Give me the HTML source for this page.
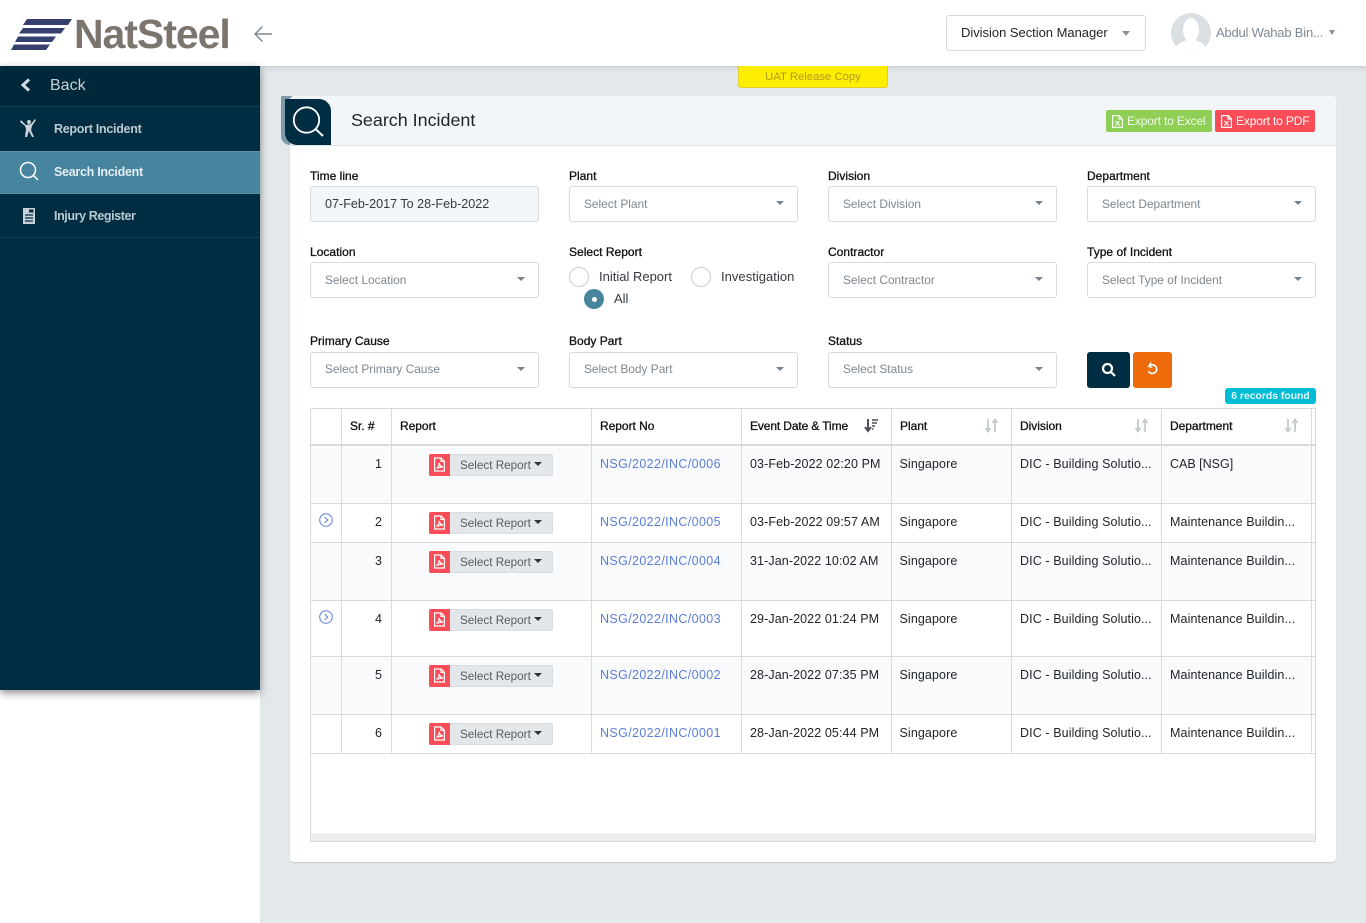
<!DOCTYPE html>
<html><head><meta charset="utf-8"><title>Search Incident</title>
<style>
*{box-sizing:border-box}
html,body{margin:0;padding:0;width:1366px;height:923px;overflow:hidden;background:#e3e8eb;font-family:"Liberation Sans",sans-serif;font-size:13px;color:#212529}
.a{position:absolute;white-space:nowrap}
.l{position:absolute;font-size:12px;color:#111;white-space:nowrap;-webkit-text-stroke:.3px #111;letter-spacing:.02px}
.s{position:absolute;width:229px;height:36px;background:#fff;border:1px solid #d6dbdf;border-radius:3px;font-size:11.9px;color:#7d8791;line-height:33px;padding-left:14px;white-space:nowrap}
.s:after{content:"";position:absolute;right:13px;top:14px;border-left:4.5px solid transparent;border-right:4.5px solid transparent;border-top:4.5px solid #77818b}
.v{position:absolute;width:1px;background:#d7dbdf}
.h{position:absolute;height:1px;background:#d7dbdf;left:310px;width:1006px}
.bg{position:absolute;left:311px;width:1004px}
.th{position:absolute;top:419px;font-size:12px;color:#111;white-space:nowrap;-webkit-text-stroke:.3px #111;letter-spacing:-.03px}
.t{position:absolute;font-size:12.5px;color:#212529;white-space:nowrap;letter-spacing:.1px}
.lnk{color:#5b7fd6;letter-spacing:.37px}
.n{text-align:right;width:20px;left:362px}
.btn{position:absolute;left:429px;width:124px;height:22px;border-radius:2px;background:#e3e7ea;border:1px solid #d9dde0;font-size:11.7px;color:#555d63;line-height:21px;padding-left:30px;white-space:nowrap}
.btn b{position:absolute;left:-1px;top:-1px;width:21px;height:22px;background:#fb4d57;border-radius:2px 0 0 2px}
.btn svg{position:absolute;left:4px;top:3px}
.btn i{position:absolute;left:104px;top:7px;border-left:4px solid transparent;border-right:4px solid transparent;border-top:4px solid #2d3338}
.sort{position:absolute;top:418px}
</style></head><body>

<!-- header -->
<div class="a" style="left:0;top:0;width:1366px;height:66px;background:#fff;box-shadow:0 2px 6px rgba(0,0,0,.12)"></div>
<svg class="a" style="left:10px;top:17px" width="64" height="34" viewBox="0 0 64 34"><g fill="#35406f"><polygon points="17,2 62,2 58,8 13,8"/><polygon points="13,11 55,11 51,16.500 9,16.500"/><polygon points="8,19.500 46,19.500 42,25 5,25"/><polygon points="4,27.500 40,27.500 36,33 1,33"/></g></svg>
<div class="a" style="left:74px;top:10px;font-size:41px;font-weight:bold;color:#7b756e;letter-spacing:-1.050px;line-height:48px">NatSteel</div>
<svg class="a" style="left:253px;top:24px" width="20" height="20" viewBox="0 0 20 20" fill="none" stroke="#7e8a96" stroke-width="1.500"><path d="M19 10H2M9.500 2.500L2 10l7.500 7.500"/></svg>
<div class="a" style="left:946px;top:15px;width:200px;height:36px;border:1px solid #d6dbdf;border-radius:3px;background:#fff"></div>
<div class="a" style="left:961px;top:25px;font-size:13px;color:#212529;letter-spacing:-.03px">Division Section Manager</div>
<div class="a" style="left:1122px;top:31px;border-left:4px solid transparent;border-right:4px solid transparent;border-top:5px solid #8a939b"></div>
<svg class="a" style="left:1171px;top:13px" width="40" height="40" viewBox="0 0 40 40"><defs><clipPath id="c"><circle cx="20" cy="20" r="20"/></clipPath></defs><circle cx="20" cy="20" r="20" fill="#d9dfe3"/><g clip-path="url(#c)" fill="#fff"><ellipse cx="20" cy="17" rx="8" ry="12"/><path d="M3 40c1-9 8-11 13-13h8c5 2 12 4 13 13z"/></g></svg>
<div class="a" style="left:1216px;top:25px;font-size:13px;color:#7e8a96;letter-spacing:-.2px">Abdul Wahab Bin...</div>
<div class="a" style="left:1329px;top:30px;border-left:3.500px solid transparent;border-right:3.500px solid transparent;border-top:5px solid #8a939b"></div>

<!-- sidebar -->
<div class="a" style="left:0;top:690px;width:260px;height:233px;background:#fff"></div>
<div class="a" style="left:0;top:66px;width:260px;height:624px;background:#002d42;box-shadow:0 3px 8px rgba(0,0,0,.45)"></div>
<div class="a" style="left:0;top:66px;width:260px;height:41px;background:#00283b;border-bottom:1px solid #123f54"></div>
<svg class="a" style="left:20px;top:78px" width="11" height="14" viewBox="0 0 11 14" fill="none" stroke="#d5dde2" stroke-width="3"><path d="M9 1.500L3 7l6 5.500"/></svg>
<div class="a" style="left:50px;top:77px;font-size:16px;color:#c8d2d8">Back</div>
<svg class="a" style="left:20px;top:118px" width="18" height="20" viewBox="0 0 18 20" fill="#c8d2d8"><circle cx="9" cy="4" r="2"/><path d="M1 2l5 5 5 -1 4-5 1 1-4 6-1 4 3 7h-2l-3-6-2 6H5l1-8-1-3-5-4z"/></svg>
<div class="a" style="left:54px;top:122px;font-size:12.500px;font-weight:bold;color:#bdc9d0;letter-spacing:-.28px">Report Incident</div>
<div class="a" style="left:0;top:151px;width:260px;height:43px;background:#47859f;border-top:1px solid #5a93a9;border-bottom:1px solid #5a93a9"></div>
<svg class="a" style="left:19px;top:161px" width="20" height="20" viewBox="0 0 20 20" fill="none" stroke="#fff" stroke-width="1.500"><circle cx="9" cy="9" r="7.500"/><path d="M14.500 14.500l4.500 4.500"/></svg>
<div class="a" style="left:54px;top:165px;font-size:12.500px;font-weight:bold;color:#e4edf1;letter-spacing:-.28px">Search Incident</div>
<svg class="a" style="left:22px;top:208px" width="14" height="16" viewBox="0 0 14 16"><path d="M1 0h12v16H1z" fill="#c8d2d8"/><path d="M3 7h8M3 10h8M3 13h8" stroke="#002d42" stroke-width="1.200"/><path d="M7 1.500h4.500v3H7z" fill="#002d42"/></svg>
<div class="a" style="left:54px;top:209px;font-size:12.500px;font-weight:bold;color:#bdc9d0;letter-spacing:-.4px">Injury Register</div>
<div class="a" style="left:0;top:237px;width:260px;height:1px;background:#123f54"></div>

<!-- uat -->
<div class="a" style="left:738px;top:66px;width:150px;height:22px;background:#ffee00;border:1px solid #e4cf2a;border-top:0;border-radius:0 0 3px 3px;text-align:center;font-size:11.300px;color:#b19a1d;line-height:23px">UAT Release Copy</div>

<!-- card -->
<div class="a" style="left:290px;top:96px;width:1046px;height:766px;background:#fff;border-radius:4px;box-shadow:0 1px 1px rgba(0,0,0,.12)"></div>
<div class="a" style="left:281px;top:96px;width:18px;height:49px;background:#7f99a6;border-radius:2px 0 0 14px"></div>
<div class="a" style="left:290px;top:96px;width:1046px;height:50px;background:#f3f6f9;border-bottom:1px solid #dfe3e6;border-radius:4px 4px 0 0"></div>
<div class="a" style="left:281px;top:96px;width:9px;height:49px;background:#7f99a6;border-radius:2px 0 0 14px"></div>
<div class="a" style="left:285px;top:99px;width:46px;height:46px;background:#002d42;border-radius:0 12px 0 12px"></div>
<svg class="a" style="left:292px;top:106px" width="34" height="32" viewBox="0 0 34 32" fill="none" stroke="#fff" stroke-width="1.800"><circle cx="14.500" cy="14" r="12.700"/><path d="M23.500 23l7.500 7" stroke-width="2"/></svg>
<div class="a" style="left:351px;top:110px;font-size:17.900px;color:#212529">Search Incident</div>
<div class="a" style="left:1106px;top:110px;width:106px;height:22px;background:#8fcf55;border-radius:2px;color:#f2faea;font-size:12px;line-height:22px;padding-left:21px;letter-spacing:-.15px">Export to Excel</div>
<svg class="a" style="left:1112px;top:115px" width="11" height="13" viewBox="0 0 11 13" fill="none" stroke="#f2faea" stroke-width="1.200"><path d="M.6.6h6.500l3.300 3.300v8.500H.6zM7 .6v3.400h3.400M3.500 6l4 4.500M7.500 6l-4 4.500"/></svg>
<div class="a" style="left:1215px;top:110px;width:100px;height:22px;background:#fb4d57;border-radius:2px;color:#fff;font-size:12px;line-height:22px;padding-left:21px;letter-spacing:-.15px">Export to PDF</div>
<svg class="a" style="left:1221px;top:115px" width="11" height="13" viewBox="0 0 11 13" fill="none" stroke="#fff" stroke-width="1.200"><path d="M.6.6h6.500l3.300 3.300v8.500H.6zM7 .6v3.400h3.400M3.500 6l4 4.500M7.500 6l-4 4.500"/></svg>

<!-- filters -->
<div class="l" style="left:310px;top:169px">Time line</div>
<div class="a" style="left:310px;top:186px;width:229px;height:36px;background:#f3f6f9;border:1px solid #d6dbdf;border-radius:3px;font-size:12.600px;line-height:35px;padding-left:14px;color:#343a40">07-Feb-2017 To 28-Feb-2022</div>
<div class="l" style="left:569px;top:169px">Plant</div><div class="s" style="left:569px;top:186px;line-height:34px">Select Plant</div>
<div class="l" style="left:828px;top:169px">Division</div><div class="s" style="left:828px;top:186px;line-height:34px">Select Division</div>
<div class="l" style="left:1087px;top:169px">Department</div><div class="s" style="left:1087px;top:186px;line-height:34px">Select Department</div>
<div class="l" style="left:310px;top:245px">Location</div><div class="s" style="left:310px;top:262px;line-height:34px">Select Location</div>
<div class="l" style="left:569px;top:245px">Select Report</div>
<div class="a" style="left:569px;top:267px;width:20px;height:20px;border:1px solid #c9ced3;border-radius:50%;background:#fff"></div>
<div class="a" style="left:599px;top:269px;font-size:13px;color:#343a40">Initial Report</div>
<div class="a" style="left:691px;top:267px;width:20px;height:20px;border:1px solid #c9ced3;border-radius:50%;background:#fff"></div>
<div class="a" style="left:721px;top:269px;font-size:13px;color:#343a40;letter-spacing:.03px">Investigation</div>
<div class="a" style="left:584px;top:289px;width:20px;height:20px;border-radius:50%;background:#47859f"></div>
<div class="a" style="left:591.500px;top:296.500px;width:5px;height:5px;border-radius:50%;background:#fff"></div>
<div class="a" style="left:614px;top:291px;font-size:13px;color:#343a40">All</div>
<div class="l" style="left:828px;top:245px">Contractor</div><div class="s" style="left:828px;top:262px;line-height:34px">Select Contractor</div>
<div class="l" style="left:1087px;top:245px">Type of Incident</div><div class="s" style="left:1087px;top:262px;line-height:34px">Select Type of Incident</div>
<div class="l" style="left:310px;top:334px">Primary Cause</div><div class="s" style="left:310px;top:352px">Select Primary Cause</div>
<div class="l" style="left:569px;top:334px">Body Part</div><div class="s" style="left:569px;top:352px">Select Body Part</div>
<div class="l" style="left:828px;top:334px">Status</div><div class="s" style="left:828px;top:352px">Select Status</div>
<div class="a" style="left:1087px;top:352px;width:43px;height:36px;background:#002d42;border-radius:3px"></div>
<svg class="a" style="left:1101px;top:362px" width="15" height="15" viewBox="0 0 15 15" fill="none" stroke="#fff" stroke-width="2.200"><circle cx="6.500" cy="6.500" r="4.500"/><path d="M10 10l4 4"/></svg>
<div class="a" style="left:1133px;top:352px;width:39px;height:36px;background:#ee6b0c;border-radius:3px"></div>
<svg class="a" style="left:1146px;top:362px" width="13" height="14" viewBox="0 0 13 14" fill="none" stroke="#fff" stroke-width="1.600"><path d="M3 4.500a4.300 4.300 0 1 1-.5 4.500"/><path d="M5 .5L2.500 4.500 6.500 5.500" stroke-width="1.300"/></svg>
<div class="a" style="left:1225px;top:388px;width:91px;height:16px;background:#00bcd4;border-radius:3px;color:#e6fafd;font-size:10.400px;font-weight:bold;line-height:18px;text-align:center">6 records found</div>

<!-- table -->
<div class="a" style="left:310px;top:408px;width:1006px;height:434px;background:#fff"></div>
<div class="bg" style="top:446px;height:57px;background:#f9fafc"></div>
<div class="bg" style="top:543px;height:57px;background:#f9fafc"></div>
<div class="bg" style="top:657px;height:57px;background:#f9fafc"></div>
<div class="a" style="left:311px;top:833px;width:1004px;height:8px;background:#eeeeee"></div>
<div class="h" style="top:408px"></div>
<div class="h" style="top:444px;height:2px"></div>
<div class="h" style="top:503px"></div><div class="h" style="top:542px"></div><div class="h" style="top:600px"></div><div class="h" style="top:656px"></div><div class="h" style="top:714px"></div><div class="h" style="top:753px"></div><div class="h" style="top:841px"></div>
<div class="v" style="left:310px;top:408px;height:434px"></div>
<div class="v" style="left:1315px;top:408px;height:434px"></div>
<div class="v" style="left:341px;top:408px;height:345px"></div>
<div class="v" style="left:391px;top:408px;height:345px"></div>
<div class="v" style="left:591px;top:408px;height:345px"></div>
<div class="v" style="left:741px;top:408px;height:345px"></div>
<div class="v" style="left:891px;top:408px;height:345px"></div>
<div class="v" style="left:1011px;top:408px;height:345px"></div>
<div class="v" style="left:1161px;top:408px;height:345px"></div>
<div class="v" style="left:1311px;top:408px;height:345px"></div>

<div class="th" style="left:350px">Sr. #</div>
<div class="th" style="left:400px">Report</div>
<div class="th" style="left:600px">Report No</div>
<div class="th" style="left:750px;letter-spacing:-.12px">Event Date &amp; Time</div>
<div class="th" style="left:900px">Plant</div>
<div class="th" style="left:1020px">Division</div>
<div class="th" style="left:1170px">Department</div>
<svg class="sort" style="left:864px" width="15" height="15" viewBox="0 0 15 15" fill="none" stroke="#4a5056" stroke-width="2"><path d="M4 1v11M1 9l3 4 3-4"/><path d="M8 2h6M8 5h5M8 8h3M8 11h1.500" stroke-width="1.500"/></svg>
<svg class="sort" style="left:984px" width="15" height="15" viewBox="0 0 15 15" fill="none" stroke="#c5cacd" stroke-width="1.800"><path d="M4 1v12M1.500 10L4 13.500 6.500 10M11 14V2M8.500 5L11 1.500 13.500 5"/></svg>
<svg class="sort" style="left:1134px" width="15" height="15" viewBox="0 0 15 15" fill="none" stroke="#c5cacd" stroke-width="1.800"><path d="M4 1v12M1.500 10L4 13.500 6.500 10M11 14V2M8.500 5L11 1.500 13.500 5"/></svg>
<svg class="sort" style="left:1284px" width="15" height="15" viewBox="0 0 15 15" fill="none" stroke="#c5cacd" stroke-width="1.800"><path d="M4 1v12M1.500 10L4 13.500 6.500 10M11 14V2M8.500 5L11 1.500 13.500 5"/></svg>

<svg class="a" style="left:319px;top:513px" width="14" height="14" viewBox="0 0 14 14" fill="none" stroke="#5b7fd6"><circle cx="7" cy="7" r="6.300"/><path d="M5.700 4l3 3-3 3"/></svg>
<svg class="a" style="left:319px;top:610px" width="14" height="14" viewBox="0 0 14 14" fill="none" stroke="#5b7fd6"><circle cx="7" cy="7" r="6.300"/><path d="M5.700 4l3 3-3 3"/></svg>

<!-- row 1 -->
<div class="t n" style="top:457px">1</div>
<div class="btn" style="top:454px"><b><svg width="13" height="15" viewBox="0 0 13 15" fill="none" stroke="#fff" stroke-width="1.200"><path d="M1.600 1h6.500l3.300 3.300V14H1.600zM8 1v3.400h3.400M3.500 11.500c2-1 3-4 2.500-5.500.5 2 2 3.500 4 4-2.500 0-4.500 .5-6.500 1.500z"/></svg></b>Select Report<i></i></div>
<div class="t lnk" style="left:600px;top:457px">NSG/2022/INC/0006</div>
<div class="t" style="left:750px;top:457px">03-Feb-2022 02:20 PM</div>
<div class="t" style="left:899.500px;top:457px">Singapore</div>
<div class="t" style="left:1020px;top:457px">DIC - Building Solutio...</div>
<div class="t" style="left:1170px;top:457px;letter-spacing:0">CAB [NSG]</div>
<!-- row 2 -->
<div class="t n" style="top:515px">2</div>
<div class="btn" style="top:512px"><b><svg width="13" height="15" viewBox="0 0 13 15" fill="none" stroke="#fff" stroke-width="1.200"><path d="M1.600 1h6.500l3.300 3.300V14H1.600zM8 1v3.400h3.400M3.500 11.500c2-1 3-4 2.500-5.500.5 2 2 3.500 4 4-2.500 0-4.500 .5-6.500 1.500z"/></svg></b>Select Report<i></i></div>
<div class="t lnk" style="left:600px;top:515px">NSG/2022/INC/0005</div>
<div class="t" style="left:750px;top:515px">03-Feb-2022 09:57 AM</div>
<div class="t" style="left:899.500px;top:515px">Singapore</div>
<div class="t" style="left:1020px;top:515px">DIC - Building Solutio...</div>
<div class="t" style="left:1170px;top:515px">Maintenance Buildin...</div>
<!-- row 3 -->
<div class="t n" style="top:554px">3</div>
<div class="btn" style="top:551px"><b><svg width="13" height="15" viewBox="0 0 13 15" fill="none" stroke="#fff" stroke-width="1.200"><path d="M1.600 1h6.500l3.300 3.300V14H1.600zM8 1v3.400h3.400M3.500 11.500c2-1 3-4 2.500-5.500.5 2 2 3.500 4 4-2.500 0-4.500 .5-6.500 1.500z"/></svg></b>Select Report<i></i></div>
<div class="t lnk" style="left:600px;top:554px">NSG/2022/INC/0004</div>
<div class="t" style="left:750px;top:554px">31-Jan-2022 10:02 AM</div>
<div class="t" style="left:899.500px;top:554px">Singapore</div>
<div class="t" style="left:1020px;top:554px">DIC - Building Solutio...</div>
<div class="t" style="left:1170px;top:554px">Maintenance Buildin...</div>
<!-- row 4 -->
<div class="t n" style="top:612px">4</div>
<div class="btn" style="top:609px"><b><svg width="13" height="15" viewBox="0 0 13 15" fill="none" stroke="#fff" stroke-width="1.200"><path d="M1.600 1h6.500l3.300 3.300V14H1.600zM8 1v3.400h3.400M3.500 11.500c2-1 3-4 2.500-5.500.5 2 2 3.500 4 4-2.500 0-4.500 .5-6.500 1.500z"/></svg></b>Select Report<i></i></div>
<div class="t lnk" style="left:600px;top:612px">NSG/2022/INC/0003</div>
<div class="t" style="left:750px;top:612px">29-Jan-2022 01:24 PM</div>
<div class="t" style="left:899.500px;top:612px">Singapore</div>
<div class="t" style="left:1020px;top:612px">DIC - Building Solutio...</div>
<div class="t" style="left:1170px;top:612px">Maintenance Buildin...</div>
<!-- row 5 -->
<div class="t n" style="top:668px">5</div>
<div class="btn" style="top:665px"><b><svg width="13" height="15" viewBox="0 0 13 15" fill="none" stroke="#fff" stroke-width="1.200"><path d="M1.600 1h6.500l3.300 3.300V14H1.600zM8 1v3.400h3.400M3.500 11.500c2-1 3-4 2.500-5.500.5 2 2 3.500 4 4-2.500 0-4.500 .5-6.500 1.500z"/></svg></b>Select Report<i></i></div>
<div class="t lnk" style="left:600px;top:668px">NSG/2022/INC/0002</div>
<div class="t" style="left:750px;top:668px">28-Jan-2022 07:35 PM</div>
<div class="t" style="left:899.500px;top:668px">Singapore</div>
<div class="t" style="left:1020px;top:668px">DIC - Building Solutio...</div>
<div class="t" style="left:1170px;top:668px">Maintenance Buildin...</div>
<!-- row 6 -->
<div class="t n" style="top:726px">6</div>
<div class="btn" style="top:723px"><b><svg width="13" height="15" viewBox="0 0 13 15" fill="none" stroke="#fff" stroke-width="1.200"><path d="M1.600 1h6.500l3.300 3.300V14H1.600zM8 1v3.400h3.400M3.500 11.500c2-1 3-4 2.500-5.500.5 2 2 3.500 4 4-2.500 0-4.500 .5-6.500 1.500z"/></svg></b>Select Report<i></i></div>
<div class="t lnk" style="left:600px;top:726px">NSG/2022/INC/0001</div>
<div class="t" style="left:750px;top:726px">28-Jan-2022 05:44 PM</div>
<div class="t" style="left:899.500px;top:726px">Singapore</div>
<div class="t" style="left:1020px;top:726px">DIC - Building Solutio...</div>
<div class="t" style="left:1170px;top:726px">Maintenance Buildin...</div>
</body></html>
